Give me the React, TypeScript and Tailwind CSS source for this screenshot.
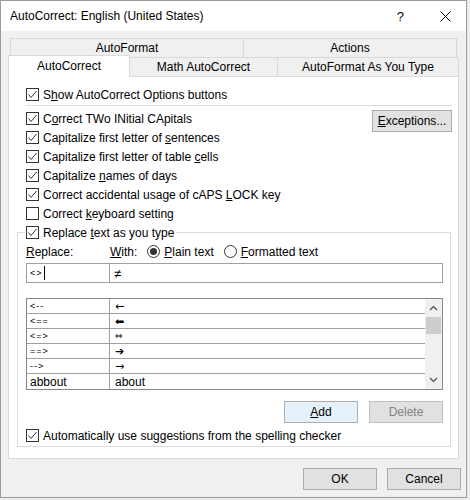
const font = "[font-family:'Segoe_UI','Liberation_Sans',sans-serif]";

function Check({ checked }: { checked: boolean }) {
  return (
    <span className="flex justify-center items-center bg-white border border-[#333333] w-[13px] h-[13px] shrink-0">
      {checked && (
        <svg width="11" height="11" viewBox="0 0 11 11">
          <polyline
            points="1.5,5.5 4,8.5 9.5,2"
            fill="none"
            stroke="#333333"
            strokeWidth="1"
          />
        </svg>
      )}
    </span>
  );
}

function Radio({ checked }: { checked: boolean }) {
  return (
    <span className="flex justify-center items-center bg-white border border-[#333333] rounded-full w-[13px] h-[13px] shrink-0">
      {checked && <span className="bg-[#333333] rounded-full w-[7px] h-[7px]" />}
    </span>
  );
}

function CheckRow({
  checked,
  children,
}: {
  checked: boolean;
  children: React.ReactNode;
}) {
  return (
    <div className="flex items-center gap-[4px] h-[19px]">
      <Check checked={checked} />
      <span>{children}</span>
    </div>
  );
}

const rows = [
  { from: "<--", to: "←", cls: "text-[11px]" },
  { from: "<==", to: "⬅", cls: "text-[11px]" },
  { from: "<=>", to: "⇔", cls: "text-[9px]" },
  { from: "==>", to: "➔", cls: "text-[11px] font-bold" },
  { from: "-->", to: "→", cls: "text-[11px]" },
];

const btn =
  "flex justify-center items-center bg-[#e1e1e1] border border-[#adadad] w-[74px] h-[22px]";

export default function App() {
  return (
    <div
      className={`${font} bg-[#ececec] w-[470px] h-[500px] text-[12px] text-black leading-none`}
    >
      <div className="flex flex-col bg-[#f0f0f0] border border-[#9b9b9b] w-[467px] h-[498px]">
        {/* title bar */}
        <div className="flex items-center bg-white pl-[9px] h-[30px]">
          <span className="text-[12px]">AutoCorrect: English (United States)</span>
          <span className="ml-auto mr-[36px] text-[13px]">?</span>
          <svg width="11" height="11" viewBox="0 0 11 11" className="mr-[15px]">
            <path d="M0.5 0.5 L10.5 10.5 M10.5 0.5 L0.5 10.5" stroke="#000" strokeWidth="1" />
          </svg>
        </div>

        <div className="flex flex-col px-[7px] pt-[7px]">
          {/* tabs */}
          <div className="flex mx-[2px] h-[19px]">
            <div className="flex flex-1 justify-center items-center border-[#d9d9d9] border-t border-l">
              AutoFormat
            </div>
            <div className="flex justify-center items-center border-[#d9d9d9] border-x border-t w-[214px]">
              Actions
            </div>
          </div>
          <div className="flex items-end h-[19px]">
            <div className="z-10 relative flex justify-center items-start bg-white -mb-[1px] pt-[4px] border-[#d9d9d9] border-x border-t w-[122px] h-[22px]">
              AutoCorrect
            </div>
            <div className="flex justify-center items-center border-[#d9d9d9] border-t border-r w-[148px] h-[19px]">
              Math AutoCorrect
            </div>
            <div className="flex justify-center items-center border-[#d9d9d9] border-t border-r w-[181px] h-[19px]">
              AutoFormat As You Type
            </div>
          </div>

          {/* panel */}
          <div className="flex flex-col bg-white pt-[8px] pr-[6px] pb-[10px] pl-[8px] border border-[#d9d9d9] h-[383px]">
            <div className="pl-[9px]">
              <CheckRow checked>
                S<u>h</u>ow AutoCorrect Options buttons
              </CheckRow>
            </div>
            <div className="bg-[#dcdcdc] mt-[1px] ml-[9px] h-[1px]" />
            <div className="flex mt-[3px] pl-[9px]">
              <div className="flex flex-col flex-1">
                <CheckRow checked>
                  C<u>o</u>rrect TWo INitial CApitals
                </CheckRow>
                <CheckRow checked>
                  Capitalize first letter of <u>s</u>entences
                </CheckRow>
                <CheckRow checked>
                  Capitalize first letter of table <u>c</u>ells
                </CheckRow>
                <CheckRow checked>
                  Capitalize <u>n</u>ames of days
                </CheckRow>
                <CheckRow checked>
                  Correct accidental usage of cAPS <u>L</u>OCK key
                </CheckRow>
                <CheckRow checked={false}>
                  Correct <u>k</u>eyboard setting
                </CheckRow>
              </div>
              <div className={`${btn} mt-[1px] w-[80px]`}>
                <span>
                  <u>E</u>xceptions...
                </span>
              </div>
            </div>

            {/* replace group */}
            <fieldset className="flex flex-col mr-[1px] pr-[7px] pb-[1px] pl-[8px] border border-[#dcdcdc]">
              <legend className="-ml-[1px] pr-[2px] pl-[1px]">
                <CheckRow checked>
                  Replace <u>t</u>ext as you type
                </CheckRow>
              </legend>
              <div className="flex items-center h-[19px]">
                <span className="w-[84px]">
                  <u>R</u>eplace:
                </span>
                <span>
                  <u>W</u>ith:
                </span>
                <span className="flex items-center gap-[4px] ml-[10px]">
                  <Radio checked />
                  <span>
                    <u>P</u>lain text
                  </span>
                </span>
                <span className="flex items-center gap-[4px] ml-[10px]">
                  <Radio checked={false} />
                  <span>
                    <u>F</u>ormatted text
                  </span>
                </span>
              </div>
              <div className="flex mt-[2px] border border-[#a0a0a0] h-[20px]">
                <div className="flex items-center pl-[3px] border-[#a0a0a0] border-r w-[83px] text-[9px] tracking-[1px]">
                  &lt;&gt;
                  <span className="bg-black ml-[1px] w-[1px] h-[14px]" />
                </div>
                <div className="flex items-center pl-[4px] text-[13px]">≠</div>
              </div>

              <div className="flex mt-[15px] border border-[#828790] h-[92px]">
                <div className="flex flex-col flex-1">
                  {rows.map((r, i) => (
                    <div key={i} className="flex border-[#a0a0a0] border-b h-[15px]">
                      <div className="flex items-center pl-[3px] border-[#a0a0a0] border-r w-[83px] text-[9px] tracking-[1px]">
                        {r.from}
                      </div>
                      <div
                        className={`flex items-center pl-[5px] [font-family:'DejaVu_Sans',sans-serif] ${r.cls}`}
                      >
                        {r.to}
                      </div>
                    </div>
                  ))}
                  <div className="flex h-[15px]">
                    <div className="flex items-center pl-[3px] border-[#a0a0a0] border-r w-[83px]">
                      abbout
                    </div>
                    <div className="flex items-center pl-[5px]">about</div>
                  </div>
                </div>
                <div className="flex flex-col items-center bg-[#f0f0f0] w-[17px]">
                  <svg width="9" height="6" viewBox="0 0 9 6" className="mt-[6px]">
                    <path d="M1 5 L4.5 1.5 L8 5" fill="none" stroke="#606060" strokeWidth="1.5" />
                  </svg>
                  <div className="bg-[#cdcdcd] mt-[6px] w-[15px] h-[17px]" />
                  <svg width="9" height="6" viewBox="0 0 9 6" className="mt-auto mb-[6px]">
                    <path d="M1 1 L4.5 4.5 L8 1" fill="none" stroke="#606060" strokeWidth="1.5" />
                  </svg>
                </div>
              </div>

              <div className="flex justify-end gap-[11px] mt-[11px]">
                <div className={`${btn} bg-[#e5f1fb] border-[#0078d7]`}>
                  <span>
                    <u>A</u>dd
                  </span>
                </div>
                <div className={`${btn} bg-[#cccccc] border-[#bfbfbf] text-[#838383]`}>
                  Delete
                </div>
              </div>
              <div className="mt-[3px]">
                <CheckRow checked>
                  Automatically use su<u>g</u>gestions from the spelling checker
                </CheckRow>
              </div>
            </fieldset>
          </div>

          {/* footer */}
          <div className="flex justify-end gap-[10px] -mr-[2px] mt-[9px]">
            <div className={`${btn} h-[21px]`}>OK</div>
            <div className={`${btn} h-[21px]`}>Cancel</div>
          </div>
        </div>
      </div>
    </div>
  );
}
